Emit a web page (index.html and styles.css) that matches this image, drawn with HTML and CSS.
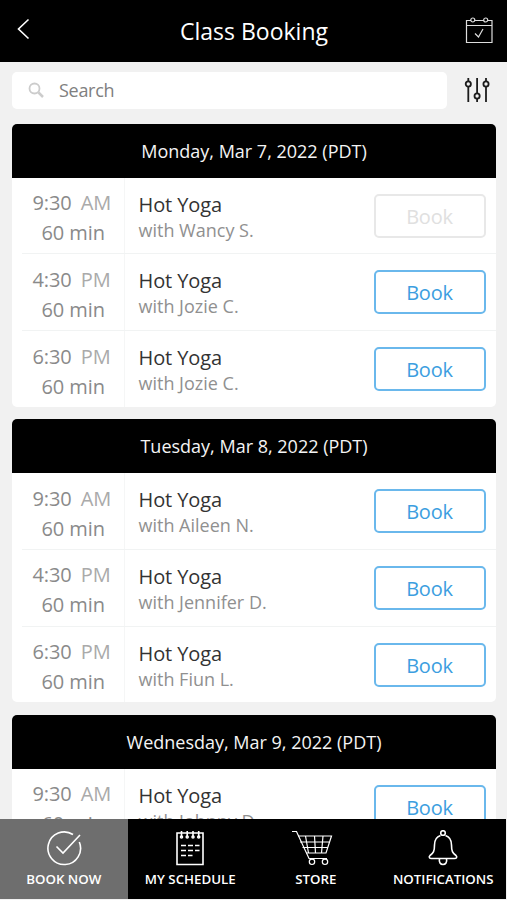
FILE: index.html
```html
<!DOCTYPE html>
<html lang="en">
<head>
    <meta charset="UTF-8">
    <meta name="viewport" content="width=device-width, initial-scale=1.0">
    <title>Class Booking</title>
    <link rel="stylesheet" href="styles.css">
</head>
<body>
    <!-- Header -->
    <header>
        <svg class="back-icon" width="14" height="22" viewBox="0 0 14 22"><path d="M11.500 1.500L1.500 11l10 9.500"/></svg>
        <h1>Class Booking</h1>
        <svg class="calendar-icon" width="28" height="28" viewBox="0 0 28 28">
            <path d="M6 4.500H1.500v22h25.500v-22H22.500M9.500 4.500h9.500M1.500 9.500h25.500M10 17.500l3.500 3.500 4.500-8"/>
            <circle cx="7.800" cy="4" r="2"/>
            <circle cx="20.700" cy="4" r="2"/>
        </svg>
    </header>

    <!-- Search -->
    <div class="search-row">
        <div class="search-box">
            <svg width="16" height="16" viewBox="0 0 16 16"><circle cx="6.500" cy="6.500" r="5"/><path class="handle" d="M10.500 10.500l4.500 4.500"/></svg>
            <span>Search</span>
        </div>
        <svg class="filter-icon" width="26" height="26" viewBox="0 0 26 26">
            <path d="M4.300 1v3M4.300 10v15M13.100 1v15M13.100 22v3M22 1v3M22 10v15"/>
            <circle cx="4.300" cy="7" r="2.600"/>
            <circle cx="13.100" cy="19" r="2.600"/>
            <circle cx="22" cy="7" r="2.600"/>
        </svg>
    </div>

    <!-- Class list -->
    <main>
        <section class="day">
            <h2>Monday, Mar 7, 2022 (PDT)</h2>
            <div class="class-row">
                <div class="time"><p>9:30 <span>AM</span></p><p class="length">60 min</p></div>
                <div class="info"><h3>Hot Yoga</h3><p>with Wancy S.</p></div>
                <button class="book" disabled>Book</button>
            </div>
            <div class="class-row">
                <div class="time"><p>4:30 <span>PM</span></p><p class="length">60 min</p></div>
                <div class="info"><h3>Hot Yoga</h3><p>with Jozie C.</p></div>
                <button class="book">Book</button>
            </div>
            <div class="class-row">
                <div class="time"><p>6:30 <span>PM</span></p><p class="length">60 min</p></div>
                <div class="info"><h3>Hot Yoga</h3><p>with Jozie C.</p></div>
                <button class="book">Book</button>
            </div>
        </section>

        <section class="day">
            <h2>Tuesday, Mar 8, 2022 (PDT)</h2>
            <div class="class-row">
                <div class="time"><p>9:30 <span>AM</span></p><p class="length">60 min</p></div>
                <div class="info"><h3>Hot Yoga</h3><p>with Aileen N.</p></div>
                <button class="book">Book</button>
            </div>
            <div class="class-row">
                <div class="time"><p>4:30 <span>PM</span></p><p class="length">60 min</p></div>
                <div class="info"><h3>Hot Yoga</h3><p>with Jennifer D.</p></div>
                <button class="book">Book</button>
            </div>
            <div class="class-row">
                <div class="time"><p>6:30 <span>PM</span></p><p class="length">60 min</p></div>
                <div class="info"><h3>Hot Yoga</h3><p>with Fiun L.</p></div>
                <button class="book">Book</button>
            </div>
        </section>

        <section class="day">
            <h2>Wednesday, Mar 9, 2022 (PDT)</h2>
            <div class="class-row">
                <div class="time"><p>9:30 <span>AM</span></p><p class="length">60 min</p></div>
                <div class="info"><h3>Hot Yoga</h3><p>with Johnny D.</p></div>
                <button class="book">Book</button>
            </div>
        </section>
    </main>

    <!-- Bottom tabs -->
    <nav>
        <a class="tab active">
            <svg width="36" height="36" viewBox="0 0 36 36">
                <path d="M27 4.500A16.300 16.300 0 1 0 33.300 12"/>
                <path d="M10.500 16.500l6.500 6.500L34 5"/>
            </svg>
            <span>BOOK NOW</span>
        </a>
        <a class="tab">
            <svg width="36" height="36" viewBox="0 0 36 36">
                <path d="M5 3h26v31.500H5z"/>
                <path d="M9.500 1v5.500M15.200 1v5.500M21 1v5.500M26.700 1v5.500"/>
                <g class="dots"><circle cx="9.500" cy="7" r="1"/><circle cx="15.200" cy="7" r="1"/><circle cx="21" cy="7" r="1"/><circle cx="26.700" cy="7" r="1"/></g>
                <path d="M9 15.500h5M16 15.500h5M23 15.500h4.500M9 20.500h5M16 20.500h5M23 20.500h4.500M9 25.500h5M16 25.500h4.500"/>
            </svg>
            <span>MY SCHEDULE</span>
        </a>
        <a class="tab store">
            <svg width="42" height="36" viewBox="0 0 42 36">
                <path d="M1 1.500h4.500L18 28.500h18"/>
                <path d="M7 6h33.500l-5.500 17H15M9 12h29.500M11.500 17.500H37M14.500 6l3 17M23.500 6l1 17M32 6l-1.500 17"/>
                <circle cx="21" cy="31.800" r="2.700"/>
                <circle cx="34" cy="31.800" r="2.700"/>
            </svg>
            <span>STORE</span>
        </a>
        <a class="tab alerts">
            <svg width="36" height="36" viewBox="0 0 36 36">
                <circle cx="18" cy="3" r="2.300"/>
                <path d="M15.500 5.500C11 7 9.500 10 9.500 15c0 6-1 8-4.500 10.500-1.500 1.500-.5 3 1.500 3h23c2 0 3-1.500 1.500-3-3.500-2.500-4.500-4.500-4.500-10.500 0-5-1.500-8-6-9.500"/>
                <path d="M14.500 28.500c-.8 4 1 6 3.500 6s4.300-2 3.500-6"/>
            </svg>
            <span>NOTIFICATIONS</span>
        </a>
    </nav>
</body>
</html>
```
FILE: styles.css
```css
* {
    box-sizing: border-box;
}

body {
    margin: 0;
    height: 900px;
    overflow: hidden;
    background: #f1f1f1;
    font-family: "Open Sans", "Noto Sans", sans-serif;
}

h1, h2, h3, p {
    margin: 0;
    font-weight: 400;
}

svg {
    display: block;
    flex: none;
    fill: none;
    stroke: #fff;
}

/* Header */
header {
    display: flex;
    align-items: center;
    justify-content: space-between;
    height: 61.500px;
    padding: 0 14px 0 17px;
    background: #000;
}

header h1 {
    padding-left: 12px;
    color: #fff;
    font-size: 23px;
}

.back-icon {
    margin-bottom: 4px;
    stroke-width: 1.600;
}

.calendar-icon {
    margin-bottom: 1px;
    stroke-width: 1.200;
    stroke: #ddd;
}

/* Search */
.search-row {
    display: flex;
    align-items: center;
    gap: 17px;
    padding: 10.500px 16px 15px 12px;
}

.search-box {
    display: flex;
    align-items: center;
    gap: 15px;
    width: 435px;
    height: 36.500px;
    padding-left: 16px;
    border-radius: 5px;
    background: #fff;
    color: #808080;
    font-size: 18px;
    letter-spacing: -0.3px;
}

.search-box span {
    padding-bottom: 1px;
}

.search-box svg {
    stroke: #ccc;
    stroke-width: 1.800;
}

.search-box .handle {
    stroke-width: 2.500;
}

.filter-icon {
    stroke: #1c1c1c;
    stroke-width: 1.800;
}

/* Class list */
main {
    display: flex;
    flex-direction: column;
    gap: 12.500px;
    width: 484px;
    margin-left: 12px;
}

.day {
    border-radius: 5px;
    background: #fff;
    overflow: hidden;
}

.day h2 {
    height: 54px;
    background: #000;
    color: #f4f4f4;
    font-size: 18px;
    line-height: 54px;
    text-align: center;
}

.class-row {
    display: flex;
    height: 76.750px;
    margin-left: 10px;
    border-bottom: 1px solid #f1f3f3;
}

.class-row:last-child {
    height: 75.500px;
    border-bottom: 0;
}

.time {
    width: 103px;
    padding: 10.500px 0 0 10.500px;
    border-right: 1px solid #f5f6f6;
    color: #8a8a8a;
    font-size: 20px;
    line-height: 30px;
    letter-spacing: -0.1px;
    white-space: nowrap;
}

.time span {
    margin-left: 4px;
    color: #aaa;
}

.time .length {
    padding-left: 9px;
}

.info {
    flex: 1;
    padding: 13px 0 0 13.500px;
}

.info h3 {
    color: #333;
    font-size: 20px;
    line-height: 27px;
    letter-spacing: -0.1px;
}

.info p {
    color: #909090;
    font-size: 18px;
    line-height: 24px;
}

.book {
    width: 112px;
    height: 44px;
    margin: 16px 10.500px 0 0;
    padding: 1px 0 0;
    border: 2px solid #6ab8ec;
    border-radius: 5px;
    background: #fff;
    color: #3c9ee0;
    font-family: inherit;
    font-size: 20px;
    letter-spacing: -0.2px;
}

.book:disabled {
    border-color: #e8e8e8;
    color: #e0e0e0;
}

/* Bottom tabs */
nav {
    position: fixed;
    top: 819px;
    left: 0;
    display: flex;
    width: 506px;
    height: 80px;
    background: #000;
}

.tab {
    display: flex;
    flex: 1;
    flex-direction: column;
    align-items: center;
    padding-top: 11px;
    color: #fff;
    font-size: 13.300px;
    font-weight: 600;
    line-height: 18px;
}

.tab svg {
    margin-bottom: 4px;
    stroke-width: 1.600;
}

.active {
    flex: 0 0 127.500px;
    background: #6e6e6e;
}

.store svg {
    margin-right: 8px;
    stroke-width: 1.200;
}

.alerts {
    padding-left: 2px;
}
```
